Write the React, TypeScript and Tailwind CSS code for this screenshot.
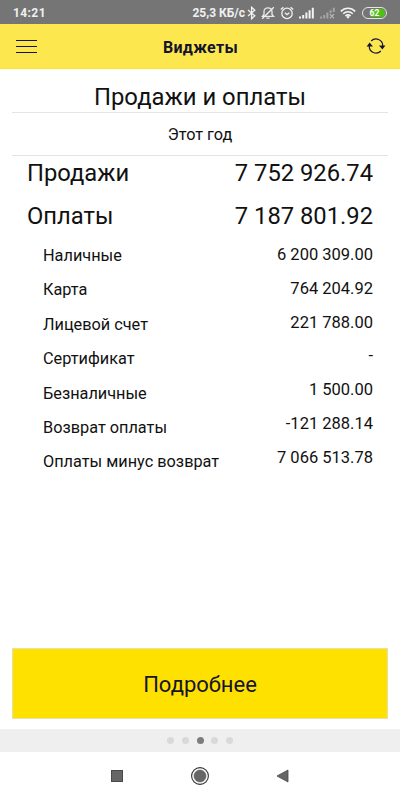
import type { ReactNode } from 'react';

interface Row {
    label: string;
    value: string;
}

const totals: Row[] = [
    { label: 'Продажи', value: '7 752 926.74' },
    { label: 'Оплаты', value: '7 187 801.92' },
];

const details: Row[] = [
    { label: 'Наличные', value: '6 200 309.00' },
    { label: 'Карта', value: '764 204.92' },
    { label: 'Лицевой счет', value: '221 788.00' },
    { label: 'Сертификат', value: '-' },
    { label: 'Безналичные', value: '1 500.00' },
    { label: 'Возврат оплаты', value: '-121 288.14' },
    { label: 'Оплаты минус возврат', value: '7 066 513.78' },
];

const PAGES = 5;
const ACTIVE_PAGE = 2;

function Icon({ w, h, className, children }: { w: number; h: number; className?: string; children: ReactNode }) {
    return (
        <svg width={w} height={h} viewBox={`0 0 ${w} ${h}`} fill="none" className={`shrink-0 ${className ?? ''}`}>
            {children}
        </svg>
    );
}

function StatusBar() {
    return (
        <div className="flex h-6 items-center bg-[#757575] pl-[13px] pr-[13px] pt-px text-[12px] font-bold text-[#f0f0f0]">
            <span className="tracking-[0.4px]">14:21</span>
            <span className="ml-auto whitespace-nowrap">25,3 КБ/с</span>
            <Icon w={9} h={14} className="ml-[2px]">
                <path d="M1 4 L7.8 9.8 L4.6 12.8 V1.2 L7.8 4.2 L1 10" stroke="#f0f0f0" strokeWidth="1.3" />
            </Icon>
            <Icon w={14} h={14} className="ml-[5px]">
                <path d="M1.4 10.4 H12.6 L11 8.4 V5.6 C11 3.2 9.2 1.9 7 1.9 C4.8 1.9 3 3.2 3 5.6 V8.4 Z M5.4 12.2 H8.6" stroke="#e8e8e8" strokeWidth="1.3" />
                <path d="M12.8 1.2 L1.2 12.8" stroke="#f0f0f0" strokeWidth="1.3" />
            </Icon>
            <Icon w={14} h={14} className="ml-[5px]">
                <circle cx="7" cy="7.4" r="5.2" stroke="#f0f0f0" strokeWidth="1.3" />
                <path d="M4.8 6.8 L7 8.6 L9.4 6.8 M0.8 3.6 L3.4 1.2 M13.2 3.6 L10.6 1.2" stroke="#f0f0f0" strokeWidth="1.3" />
            </Icon>
            <Icon w={15} h={12} className="ml-[5px]">
                <path d="M1 11.5 V9.5 M4.2 11.5 V8 M7.4 11.5 V5.6 M10.6 11.5 V3.2 M13.8 11.5 V0.8" stroke="#f4f4f4" strokeWidth="2" />
            </Icon>
            <Icon w={15} h={12} className="ml-[6px]">
                <path d="M1 11.5 V9.5 M4.2 11.5 V8 M7.4 11.5 V5.6 M10.6 6 V3.2 M13.8 5 V0.8" stroke="#a6a6a6" strokeWidth="2" />
                <path d="M9.8 7 L14 11.4 M14 7 L9.8 11.4" stroke="#b4b4b4" strokeWidth="1.2" />
            </Icon>
            <Icon w={16} h={12} className="ml-[5px]">
                <path d="M0.8 4.4 C4.8 0.2 11.2 0.2 15.2 4.4 M3.2 6.8 C6 4 10 4 12.8 6.8 M5.4 9 C7 7.6 9 7.6 10.6 9" stroke="#f4f4f4" strokeWidth="1.6" />
                <path d="M6.2 9.8 L8 11.8 L9.8 9.8 C8.8 8.8 7.2 8.8 6.2 9.8 Z" fill="#f4f4f4" />
            </Icon>
            <div className="ml-[6px] h-[12px] w-[25px] rounded-full border border-[#e4e4e4] p-px">
                <div className="flex h-full items-center justify-center rounded-full bg-[linear-gradient(90deg,#757575_35%,#4ac413_35%)] pt-px text-[8.5px] leading-[8px] text-white">
                    62
                </div>
            </div>
        </div>
    );
}

function Header() {
    return (
        <header className="flex h-[45px] items-center justify-between border-b border-[#fde12a] bg-[#fde74f] pl-4 pr-[14px]">
            <Icon w={21} h={15}>
                <path d="M0 1.5 H21 M0 7.5 H21 M0 13.5 H21" stroke="#14143a" strokeWidth="1.1" />
            </Icon>
            <h1 className="-ml-[2px] pt-[3px] text-[16px] font-bold tracking-[0.3px] text-[#14142c]">Виджеты</h1>
            <Icon w={20} h={18}>
                <path d="M5.2 4 A6.7 6.7 0 0 1 16.7 9 M14.8 14 A6.7 6.7 0 0 1 3.3 9" stroke="#14143a" strokeWidth="1.2" />
                <path d="M13 8.6 H19.4 L16.4 12.4 Z M0.6 9.4 H7 L3.6 5.6 Z" fill="#14143a" />
            </Icon>
        </header>
    );
}

export default function App() {
    return (
        <div className="flex h-[800px] w-[400px] flex-col overflow-hidden bg-white font-['Roboto',sans-serif] text-[#111]">
            <StatusBar />
            <Header />

            <main className="flex flex-1 flex-col px-3">
                <h2 className="h-[44px] border-b border-[#e4e4e4] pt-[12px] text-center text-[23.85px] leading-8">
                    Продажи и оплаты
                </h2>
                <div className="h-[43px] border-b border-[#e4e4e4] text-center text-[16.3px] leading-[43px]">Этот год</div>

                <div className="px-[15px] pb-px text-[23.75px]">
                    {totals.map((row) => (
                        <div key={row.label} className="flex h-[43px] justify-between leading-[34px]">
                            <span>{row.label}</span>
                            <span>{row.value}</span>
                        </div>
                    ))}
                </div>

                {/* labels and values have slightly different row heights */}
                <div className="flex justify-between pl-[31px] pr-[15px] text-[16.3px]">
                    <div className="pt-px">
                        {details.map((row) => (
                            <div key={row.label} className="h-[34.4px] leading-6">{row.label}</div>
                        ))}
                    </div>
                    <div className="text-right text-[16.5px]">
                        {details.map((row) => (
                            <div key={row.label} className="h-[33.75px] leading-6">{row.value}</div>
                        ))}
                    </div>
                </div>

                <button className="mb-[10px] mt-auto h-[71px] border border-[#e8e0b0] bg-[#ffe100] pt-[2px] text-[22px] text-[#14142c]">
                    Подробнее
                </button>
            </main>

            <div className="flex h-[23px] items-center justify-center gap-[7.7px] bg-[#efefef]">
                {Array.from({ length: PAGES }, (_, i) => (
                    <span key={i} className={`size-[7px] rounded-full ${i === ACTIVE_PAGE ? 'bg-[#7d7d7d]' : 'bg-[#d9d9d9]'}`} />
                ))}
            </div>

            <nav className="flex h-12 items-center justify-center gap-[68px]">
                <Icon w={12} h={12}>
                    <rect x="0.5" y="0.5" width="11" height="11" fill="#666" stroke="#4a4a4a" />
                </Icon>
                <Icon w={18} h={18}>
                    <circle cx="9" cy="9" r="8.4" stroke="#333" strokeWidth="1.1" />
                    <circle cx="9" cy="9" r="6" fill="#666" stroke="#555" strokeWidth="0.6" />
                </Icon>
                <Icon w={12} h={14}>
                    <path d="M0 7 L11 1 V13 Z" fill="#666" stroke="#4a4a4a" strokeWidth="0.8" />
                </Icon>
            </nav>
        </div>
    );
}
